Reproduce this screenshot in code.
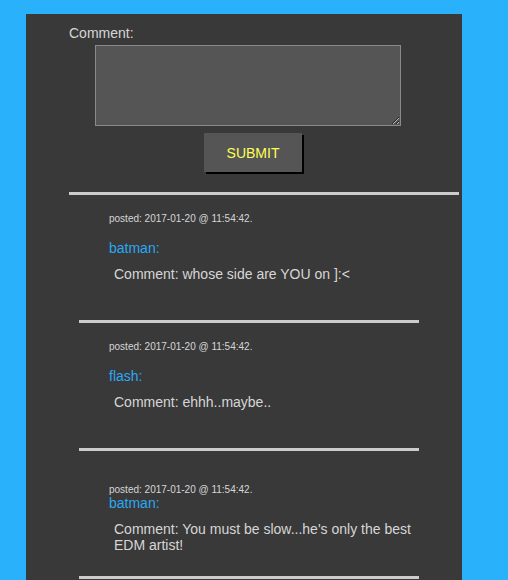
import React from "react";

type C = { name: string; text: string };

export default function App() {
  const font = { fontFamily: '"Liberation Sans", Arial, Helvetica, sans-serif' };
  return (
    <div className="min-h-[580px] w-full bg-[#2ab1fc] pt-[14px] pl-[26px]" style={font}>
      <div className="w-[436px] min-h-[566px] bg-[#393939] pl-[43px] pt-[11px]">
        <div className="text-[14px] leading-[16px] text-[#d6d6d6]">Comment:</div>
        <textarea className="block ml-[26px] mt-[4px] w-[306px] h-[81px] bg-[#555555] border border-[#8a8a8a] outline-none text-[#ddd] p-[2px]" />
        <button className="block ml-[135px] mt-[7px] w-[98px] h-[39px] bg-[#555555] text-[#ffff55] text-[14px] leading-[16px] shadow-[2px_2px_0_#000] pt-[1px]">
          SUBMIT
        </button>
        <div className="mt-[20px] w-[390px] h-[3px] bg-[#cccccc]" />

        <div className="ml-[10px] w-[340px]">
          <div className="pl-[30px] pt-[18px]">
            <div className="text-[10px] leading-[11px] text-[#d6d6d6]">posted: 2017-01-20 @ 11:54:42.</div>
            <div className="mt-[16px] text-[14px] leading-[16px] text-[#2aa8f5]">batman:</div>
            <div className="mt-[10px] pl-[5px] text-[14px] leading-[16px] text-[#d6d6d6]">Comment: whose side are YOU on ]:&lt;</div>
          </div>
          <div className="mt-[38px] h-[3px] bg-[#cccccc]" />

          <div className="pl-[30px] pt-[18px]">
            <div className="text-[10px] leading-[11px] text-[#d6d6d6]">posted: 2017-01-20 @ 11:54:42.</div>
            <div className="mt-[16px] text-[14px] leading-[16px] text-[#2aa8f5]">flash:</div>
            <div className="mt-[10px] pl-[5px] text-[14px] leading-[16px] text-[#d6d6d6]">Comment: ehhh..maybe..</div>
          </div>
          <div className="mt-[38px] h-[3px] bg-[#cccccc]" />

          <div className="pl-[30px] pt-[33px]">
            <div className="text-[10px] leading-[11px] text-[#d6d6d6]">posted: 2017-01-20 @ 11:54:42.</div>
            <div className="text-[14px] leading-[16px] text-[#2aa8f5]">batman:</div>
            <div className="mt-[10px] pl-[5px] text-[14px] leading-[16px] text-[#d6d6d6]">Comment: You must be slow...he's only the best EDM artist!</div>
          </div>
          <div className="mt-[23px] h-[3px] bg-[#cccccc]" />
        </div>
      </div>
    </div>
  );
}
